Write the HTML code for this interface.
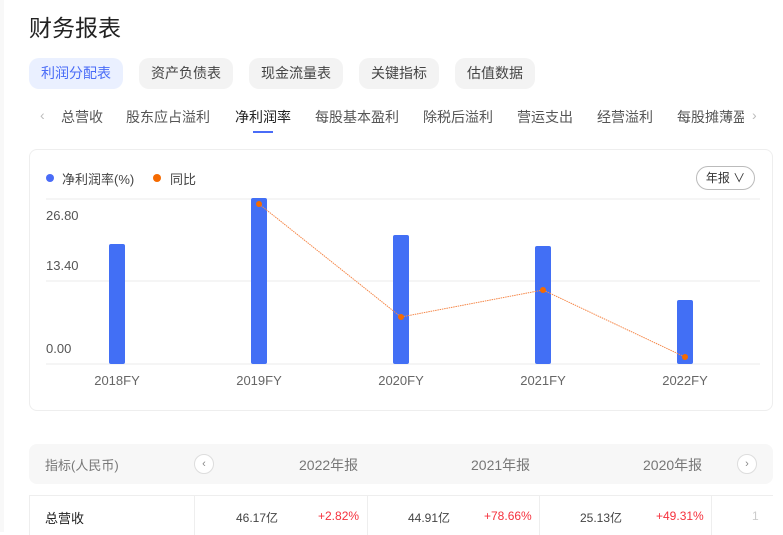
<!DOCTYPE html>
<html><head><meta charset="utf-8"><style>
*{margin:0;padding:0;box-sizing:border-box}
body{width:783px;height:532px;overflow:hidden;background:#fff;font-family:"Liberation Sans","Noto Sans CJK SC",sans-serif;color:#333;position:relative}
.a{position:absolute;white-space:nowrap}
.tab{position:absolute;top:58px;height:31px;border-radius:10px;background:#f3f3f3;font-size:14px;color:#444;line-height:31px;text-align:center}
.sub{position:absolute;top:107px;font-size:14px;color:#555;white-space:nowrap}
</style></head><body>
<div class="a" style="left:0;top:0;width:4px;height:532px;background:#f8f8f8"></div>
<div class="a" style="left:29px;top:9px;font-size:23px;color:#222">财务报表</div>
<div class="tab" style="left:29px;width:94px;background:#eaf0ff;color:#4a6cf7">利润分配表</div>
<div class="tab" style="left:139px;width:94px">资产负债表</div>
<div class="tab" style="left:249px;width:94px">现金流量表</div>
<div class="tab" style="left:359px;width:80px">关键指标</div>
<div class="tab" style="left:455px;width:80px">估值数据</div>
<div class="sub" style="left:40px;color:#bbb">‹</div>
<div class="sub" style="left:61px">总营收</div>
<div class="sub" style="left:126px">股东应占溢利</div>
<div class="sub" style="left:235px;color:#222">净利润率</div>
<div class="a" style="left:253px;top:131px;width:20px;height:2px;background:#4a6cf7"></div>
<div class="sub" style="left:315px">每股基本盈利</div>
<div class="sub" style="left:423px">除税后溢利</div>
<div class="sub" style="left:517px">营运支出</div>
<div class="sub" style="left:597px">经营溢利</div>
<div class="sub" style="left:677px;width:67px;overflow:hidden">每股摊薄盈利</div>
<div class="sub" style="left:752px;color:#bbb">›</div>

<div class="a" style="left:29px;top:149px;width:744px;height:262px;border:1px solid #eee;border-radius:8px"></div>
<div class="a" style="left:46px;top:174px;width:8px;height:8px;border-radius:50%;background:#4a6cf7"></div>
<div class="a" style="left:62px;top:169px;font-size:13px;color:#444">净利润率(%)</div>
<div class="a" style="left:153px;top:174px;width:8px;height:8px;border-radius:50%;background:#f56a00"></div>
<div class="a" style="left:170px;top:169px;font-size:13px;color:#444">同比</div>
<div class="a" style="left:696px;top:166px;width:59px;height:24px;border:1px solid #bbb;border-radius:12px;font-size:12px;line-height:22px;text-align:center;color:#333">年报 ∨</div>
<svg class="a" style="left:0;top:0" width="783" height="532">
<g stroke="#f2f2f2" stroke-width="1.5"><line x1="46" y1="199" x2="760" y2="199"/><line x1="46" y1="281" x2="760" y2="281"/><line x1="46" y1="364" x2="760" y2="364"/></g>
<g fill="#426ff5">
<rect x="109" y="244" width="16" height="120" rx="2"/>
<rect x="251" y="198" width="16" height="166" rx="2"/>
<rect x="393" y="235" width="16" height="129" rx="2"/>
<rect x="535" y="246" width="16" height="118" rx="2"/>
<rect x="677" y="300" width="16" height="64" rx="2"/>
</g>
<polyline points="259,204 401,317 543,290 685,357" fill="none" stroke="#f5884a" stroke-width="1" stroke-dasharray="1.5,0.8"/>
<g fill="#f56a00"><circle cx="259" cy="204" r="3"/><circle cx="401" cy="317" r="3"/><circle cx="543" cy="290" r="3"/><circle cx="685" cy="357" r="3"/></g>
<g font-family="Liberation Sans" font-size="13" fill="#555">
<text x="46" y="220">26.80</text><text x="46" y="270">13.40</text><text x="46" y="353">0.00</text>
<g fill="#666" text-anchor="middle"><text x="117" y="385">2018FY</text><text x="259" y="385">2019FY</text><text x="401" y="385">2020FY</text><text x="543" y="385">2021FY</text><text x="685" y="385">2022FY</text></g>
</g>
</svg>

<div class="a" style="left:29px;top:444px;width:744px;height:40px;background:#f7f7f7;border-radius:8px"></div>
<div class="a" style="left:45px;top:455px;font-size:13px;color:#777">指标(人民币)</div>
<div class="a" style="left:194px;top:454px;width:20px;height:20px;border-radius:50%;background:#fff;border:1px solid #ddd;font-size:11px;line-height:18px;text-align:center;color:#888">‹</div>
<div class="a" style="left:299px;top:455px;font-size:14px;color:#777">2022年报</div>
<div class="a" style="left:471px;top:455px;font-size:14px;color:#777">2021年报</div>
<div class="a" style="left:643px;top:455px;font-size:14px;color:#777">2020年报</div>
<div class="a" style="left:737px;top:454px;width:20px;height:20px;border-radius:50%;background:#fff;border:1px solid #ddd;font-size:11px;line-height:18px;text-align:center;color:#888">›</div>
<div class="a" style="left:29px;top:495px;width:744px;height:1px;background:#eee"></div>
<div class="a" style="left:29px;top:495px;width:1px;height:40px;background:#eee"></div>
<div class="a" style="left:194px;top:495px;width:1px;height:40px;background:#eee"></div>
<div class="a" style="left:367px;top:495px;width:1px;height:40px;background:#eee"></div>
<div class="a" style="left:539px;top:495px;width:1px;height:40px;background:#eee"></div>
<div class="a" style="left:711px;top:495px;width:1px;height:40px;background:#eee"></div>
<div class="a" style="left:45px;top:508px;font-size:13px;color:#222">总营收</div>
<div class="a" style="left:236px;top:509px;font-size:12px;color:#444">46.17亿</div>
<div class="a" style="left:318px;top:509px;font-size:12px;color:#f5313d">+2.82%</div>
<div class="a" style="left:408px;top:509px;font-size:12px;color:#444">44.91亿</div>
<div class="a" style="left:484px;top:509px;font-size:12px;color:#f5313d">+78.66%</div>
<div class="a" style="left:580px;top:509px;font-size:12px;color:#444">25.13亿</div>
<div class="a" style="left:656px;top:509px;font-size:12px;color:#f5313d">+49.31%</div>
<div class="a" style="left:752px;top:509px;font-size:12px;color:#ccc">1</div>
</body></html>
